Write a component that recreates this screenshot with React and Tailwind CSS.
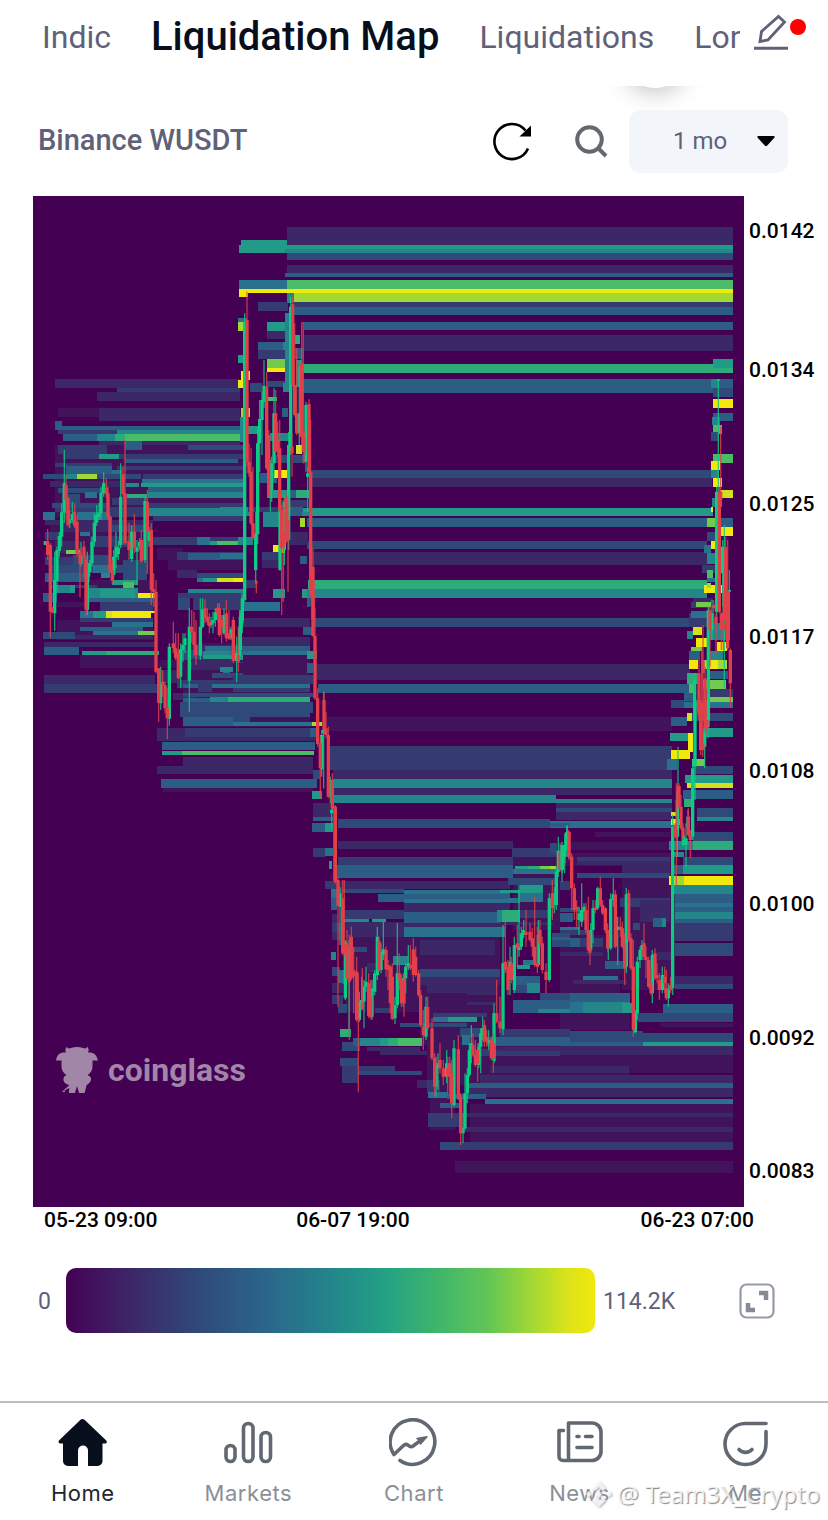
import React from "react";

const LEVELS = {
  a: "#41135a", b: "#3c2866", c: "#353a70", d: "#2f4a79", e: "#2b5d85", f: "#29718d",
  g: "#24858b", h: "#229a88", i: "#2dab79", j: "#4abb66", k: "#74ca4c", l: "#a2d834",
  m: "#d2e11b", y: "#f2e80c",
};

/* Heat bands: x1 y1 x2 y2 level */
const BANDS = `287 227 733 245 b;239 245 287 253 h;241 240 287 245 h;287 245 733 249 h;285 249 733 253 g;287 253 733 260 d;
287 265 733 273 b;285 273 733 277 e;239 280 287 289 f;287 280 733 289 j;287 293 294 303 g;294 293 733 302 l;
239 289 733 293 y;239 293 248 297 y;293 302 733 307 c;293 307 733 315 e;304 322 733 330 e;304 335 733 351 b;303 364 733 373 i;
303 379 733 393 e;311 470 712 478 d;311 478 712 487 b;303 508 713 516 h;307 518 713 527 e;307 541 707 549 d;312 552 707 565 b;
308 580 707 589 i;303 589 707 598 g;312 618 700 627 d;315 664 690 680 b;318 684 690 693 e;326 717 672 731 a;330 746 672 770 c;
333 770 672 779 b;333 779 672 788 g;333 788 672 795 b;334 795 556 803 g;556 799 672 803 g;556 803 672 808 b;556 808 672 812 d;
556 812 672 820 b;338 819 550 828 d;550 821 672 828 f;338 841 513 849 b;338 857 513 865 c;335 865 513 878 e;378 865 513 870 e;
335 881 510 889 b;335 889 404 893 d;404 890 510 894 f;378 894 510 902 e;404 899 510 903 f;404 903 510 912 b;404 912 505 923 e;
404 923 505 927 b;404 927 505 937 f;345 910 404 919 c;343 919 369 922 g;372 919 386 922 h;343 922 404 937 b;420 940 495 955 b;
420 969 500 975 d;420 975 500 985 b;470 1049 560 1056 c;490 1058 733 1066 a;490 1066 629 1073 b;560 1031 643 1042 d;
629 1033 733 1042 d;560 1042 643 1046 e;643 1042 733 1046 h;560 1046 733 1055 b;629 1055 733 1073 a;480 1075 733 1083 b;
468 1083 733 1088 e;468 1088 733 1097 b;485 1099 733 1104 f;460 1113 733 1117 b;460 1127 733 1132 b;460 1142 733 1150 c;455 1161 733 1173 a`;

/* Faint base layer behind the dense areas */
const BASE = `55 445 243 517 a;50 520 153 573 a;90 580 153 598 a;57 620 153 640 a;183 643 310 727 a;
345 937 500 1012 a;420 1012 500 1045 a;427 1045 630 1085 a;470 1104 733 1142 a;430 1085 455 1130 a;
513 850 560 930 a;560 853 672 866 a;622 866 672 990 a;560 935 620 993 a;560 1014 630 1030 a`;

/* Denser areas, drawn at three units per chart unit from their own origin */
const FIELDS = [
  [30, 360, `75 57 630 84 b;260 84 630 97 c;200 97 630 123 b;83 145 630 170 a;208 145 630 183 b;75 183 95 210 e;95 197 630 210 e;
83 210 260 222 c;260 210 640 223 g;100 223 200 243 e;200 223 255 243 g;255 223 285 243 i;285 223 640 243 j;208 243 630 256 b;285 243 335 270 e;
345 256 475 270 a;475 256 640 270 d;83 256 230 283 c;100 283 640 297 c;208 283 267 297 h;285 297 625 310 e;75 310 245 320 c;
108 317 245 343 e;260 317 640 330 c;245 330 275 343 f;38 343 333 357 d;340 343 640 357 c;108 343 140 356 g;140 343 200 356 l;
335 356 640 370 f;288 370 327 382 g;333 370 640 382 h;60 363 280 380 b;355 382 640 397 e;83 383 220 400 d;355 397 640 414 g;
290 403 350 428 i;165 397 200 415 f;95 403 150 430 d;65 430 240 445 d;245 415 355 435 c;355 428 640 443 c;75 443 240 457 c;
38 457 75 480 f;140 457 245 480 f;355 443 640 468 g;240 440 355 470 c;45 480 370 495 b;370 468 640 482 c;90 495 370 515 b;
150 515 180 528 f;45 515 90 540 c;240 495 350 515 d;370 530 640 555 c;500 530 540 555 f;540 543 560 555 h;560 543 625 555 j;
625 530 640 555 f;75 543 150 580 b;108 570 150 582 k;180 528 300 560 c;380 563 460 600 a;440 575 640 600 c;475 580 570 600 e;
570 580 640 598 f;45 590 150 615 c;130 585 240 615 d;60 615 350 640 d;190 615 245 640 f;213 640 240 655 g;45 640 180 665 e;
280 600 350 660 d;415 600 640 630 a;440 630 500 655 b;500 640 640 655 d;500 655 520 667 f;520 655 560 667 h;560 655 610 667 m;
610 655 640 667 y;60 675 200 685 c;75 675 135 700 g;120 675 135 700 h;245 660 325 675 h;175 685 325 713 g;210 687 315 713 h;
280 667 312 685 j;38 700 80 725 e;325 700 375 713 y;475 687 640 700 g;445 700 640 715 c;80 725 180 740 a;175 713 370 725 e;
210 725 370 753 c;150 753 190 773 f;190 753 228 773 h;228 753 247 773 m;247 753 362 773 y;362 753 375 760 y;150 773 370 785 c;
245 785 370 800 f;150 800 340 812 e;190 812 370 825 f;325 812 375 825 k;40 815 135 838 d;135 825 370 838 b;445 715 480 750 d;
42 847 375 860 b;42 860 147 886 e;155 873 228 886 h;228 873 387 886 i;150 886 375 925 a;387 900 640 925 a;42 945 375 972 b;
42 972 385 998 c;450 855 640 870 b;440 870 520 900 d;520 873 640 885 g;550 885 640 900 h;480 905 640 925 c;580 925 600 938 f;
545 938 640 955 d;385 930 450 970 b;440 960 640 985 c;460 973 640 985 e;430 998 500 1020 b;460 1013 600 1025 e;600 1013 660 1025 h;
450 1025 660 1072 d;475 1072 610 1097 e;610 1072 660 1095 d;380 1105 415 1144 c;460 1105 660 1144 b`],
  [150, 560, `270 173 480 200 b;270 232 480 258 b;270 127 390 152 f;115 87 280 100 g;130 113 280 150 c;165 258 240 272 f;240 258 480 273 e;
240 273 480 285 f;160 285 250 298 h;125 298 250 330 b;210 320 250 335 g;250 310 480 330 a;250 346 490 372 c;145 372 185 397 c;
185 372 480 385 f;250 385 480 397 c;100 400 490 412 d;180 412 235 425 g;235 412 480 425 i;125 425 490 460 d;253 458 480 470 d;
100 472 250 497 e;250 485 490 497 f;20 505 500 543 b;105 505 490 530 c;35 545 495 570 e;35 572 95 584 h;95 572 492 584 j;
100 590 490 617 b;20 617 490 643 b;33 657 500 683 e;40 683 490 695 a;373 87 400 112 i;470 113 490 138 d;460 200 490 225 e;
470 272 500 298 h;470 310 490 338 e;485 485 515 497 l;480 505 500 530 e;490 630 510 656 d;485 692 515 716 h;490 730 540 768 b;
490 768 545 782 e;485 792 525 815 e;525 792 548 815 h;490 865 525 890 c;525 865 550 888 f;537 903 547 928 h;525 963 560 987 d;
545 987 565 1015 g`],
  [220, 200, `55 353 80 366 f;55 366 70 392 l;55 465 70 490 h;62 512 90 540 y;55 540 70 563 y;62 625 90 650 l;115 307 205 332 c;
140 366 205 392 h;140 392 205 418 b;115 425 190 450 e;188 425 205 450 g;115 450 205 478 c;140 478 205 505 k;140 505 207 517 y;
90 550 125 577 d;140 543 205 560 d;190 550 215 577 g;140 590 170 603 j;185 625 205 650 e;85 677 120 703 h;60 650 80 725 g;
150 698 210 723 g;195 340 210 565 g;225 405 240 432 i;225 445 250 478 e;228 480 245 560 h;228 735 247 763 m;220 765 255 790 d;
165 765 205 790 d;120 820 170 848 e;162 810 200 835 y;140 870 200 895 h;200 870 227 895 e;227 870 268 895 i;0 922 90 948 g;
85 922 180 935 c;130 935 180 980 g;180 900 260 922 c;210 922 250 948 e;247 935 270 948 g;240 955 255 982 l;55 1010 100 1035 g;
160 1035 195 1060 y;210 995 265 1035 b;127 1055 180 1080 c;127 1080 180 1105 b;240 1068 260 1093 e;70 1140 110 1165 c;
160 1167 195 1193 h;247 1167 262 1193 h;260 1193 270 1220 e;70 1207 180 1232 f`],
  [560, 340, `460 57 519 84 h;453 118 478 143 g;460 143 519 170 d;460 177 519 204 y;460 218 519 243 e;455 232 480 256 g;458 256 485 283 j;
453 277 478 302 d;460 343 519 370 j;453 364 480 390 y;453 390 478 415 g;460 415 485 441 y;480 450 519 475 m;455 475 485 500 g;
453 500 460 515 y;440 535 465 562 k;478 535 519 560 e;483 562 519 588 y;440 575 465 602 d;453 602 465 628 y;433 615 453 640 f;
440 640 465 673 g;427 675 465 700 c;440 690 460 714 j;440 714 465 725 f;433 735 485 760 y;440 730 453 745 l;400 773 460 788 b;
393 787 453 805 c;407 787 453 801 k;387 820 440 860 c;393 813 440 835 f;380 872 400 898 g;400 860 427 886 m;407 893 440 920 y;
393 920 425 933 k;450 850 500 900 g;470 907 500 932 y;387 932 420 960 e;450 932 490 960 g;387 960 415 986 y;433 960 500 986 l;
450 960 473 986 y;450 993 505 1018 e;380 1000 413 1033 i;430 1020 497 1046 k;387 1033 400 1060 j;450 1046 519 1072 c;
450 1072 519 1086 k;450 1086 519 1104 f;333 1080 400 1105 c;373 1060 400 1083 e`],
  [560, 700, `0 425 330 450 a;105 397 330 410 a;50 470 330 482 c;50 482 187 495 b;187 482 330 520 b;50 520 330 535 d;0 543 30 570 c;230 555 330 580 a;
180 595 330 620 c;0 625 60 635 d;0 640 40 665 e;240 600 330 665 b;280 655 305 680 e;305 655 318 680 g;220 668 240 690 d;
0 680 60 690 f;0 690 90 705 c;0 715 60 740 e;60 715 130 740 c;0 755 130 768 b;135 783 200 807 e;0 795 135 807 a;70 828 173 840 f;
0 810 210 825 a;40 840 200 853 b;0 880 210 905 e;0 905 70 940 f;70 905 210 938 g;185 910 215 938 h;0 940 210 970 a;290 755 335 780 b;
333 0 372 25 d;372 5 519 25 f;392 40 519 64 d;333 52 380 78 e;330 98 385 124 h;430 85 519 110 h;333 150 390 176 y;383 98 400 155 y;
380 38 395 64 m;322 177 350 210 f;397 177 435 197 k;395 197 519 222 d;375 225 519 250 h;380 250 519 264 m;370 270 519 297 e;
372 297 400 322 i;410 323 519 350 d;410 350 519 362 g;333 335 357 349 m;333 357 365 375 y;400 397 519 423 d;327 423 400 450 g;
400 423 519 450 i;370 470 519 495 d;333 457 372 470 g;340 495 370 522 e;370 495 519 522 h;327 529 345 556 y;345 529 372 556 l;
372 529 519 556 y;335 556 519 582 g;345 582 519 610 e;345 610 519 622 f;345 622 519 635 e;345 635 519 657 g;345 657 519 668 e;
345 668 519 722 c;345 729 519 768 d;345 828 519 853 b;345 853 519 866 d;308 912 519 940 e;235 940 519 965 d;300 968 519 980 a`],
  [300, 680, `40 372 95 410 b;40 410 98 423 e;35 430 75 455 e;75 430 98 455 h;40 505 75 528 c;75 505 98 528 f;88 543 95 568 h;75 603 110 628 c;
92 628 115 653 f;92 653 110 690 e;95 703 115 730 b;95 730 130 755 c;95 755 130 780 b;92 815 107 840 g;95 860 120 887 d;115 870 135 912 f;
95 910 130 940 b;95 945 130 972 c;115 973 140 1000 d;120 1047 152 1070 i;127 1087 180 1112 d;120 1134 175 1158 d;127 1158 285 1185 c;
127 1185 175 1210 c;175 1172 365 1185 d;200 1100 360 1112 b;240 1112 380 1125 b;160 1075 180 1098 e;180 1075 240 1098 g;
240 1075 265 1098 h;265 1075 295 1098 i;295 1075 365 1098 j;635 505 770 530 c;750 430 810 440 e;750 490 770 520 d;645 557 685 568 h;
685 557 720 568 i;720 557 750 568 k;750 557 768 568 l;640 568 770 582 f;625 595 770 615 d;655 640 730 665 f;660 615 730 640 h;
600 630 660 640 h;625 655 660 670 f;590 690 605 725 g;605 690 660 725 i;660 690 760 715 c;600 725 760 735 b;755 760 810 800 d;
755 770 810 780 e;670 840 700 855 f;650 855 690 866 h;640 888 720 940 d;645 888 720 915 e;680 910 720 938 g;720 940 810 975 d;
640 960 810 998 e;715 987 810 998 g;500 940 590 975 b;400 1000 560 1012 c;400 1012 445 1025 f;445 1012 530 1025 h;300 1028 500 1040 d;
480 1045 560 1070 d;485 1065 510 1095 f;600 1047 810 1072 c;560 1072 810 1098 e;590 1100 810 1112 b;160 800 200 815 d;
280 828 325 855 g;200 850 240 875 b;225 985 270 1000 c;360 868 600 890 d;360 890 600 905 b;380 915 590 940 b;390 945 600 965 a;380 1200 420 1240 c;
385 1235 440 1255 f;440 1243 558 1258 e;420 1270 480 1285 e;385 1300 480 1340 c;420 1385 480 1410 d;350 1200 380 1225 b;540 1190 810 1200 b`],
];

/* Candles: centre, body top, body bottom, wick top, wick bottom */
const CANDLES = [
  [30, 360,
    `46 543 555 543 555;74 660 760 575 812;81 570 662 560 700;88 528 572 515 590;95 457 530 430 560;103 370 458 270 488;119 478 490 450 505;
127 462 480 425 490;153 590 612 545 620;172 636 750 575 765;179 610 636 600 650;186 545 610 530 620;193 488 545 460 560;200 465 488 435 498;
207 458 470 430 480;213 398 458 380 480;221 370 400 337 410;251 590 645 570 655;258 560 592 515 625;265 563 582 543 600;272 410 555 310 565;
305 515 597 495 605;321 562 575 540 675;329 545 560 535 570;345 423 600 410 608;357 515 543 500 560;392 970 1030 920 1050;418 860 1076 850 1097;
452 868 950 850 985;459 855 870 820 905;465 835 855 820 880;478 800 962 745 1057;511 800 887 715 900;518 748 800 715 805;543 788 795 770 803;
549 780 790 755 820;556 757 780 745 800;582 765 820 745 825;603 808 835 800 840;620 880 903 830 967;629 800 885 750 890;636 750 790 700 800`,
    `53 543 585 507 600;61 555 755 550 833;67 745 757 740 760;108 375 420 345 480;114 415 495 410 500;134 455 497 430 505;141 485 580 465 590;
150 577 612 565 712;162 560 595 543 655;168 597 750 590 768;229 383 403 355 415;234 400 470 380 480;240 470 635 465 640;247 630 662 600 672;
279 342 402 320 410;285 400 550 240 555;297 543 570 488 600;313 515 563 462 580;334 540 603 510 608;352 425 515 390 642;364 510 690 490 735;
371 688 695 640 740;378 695 935 660 940;386 925 1028 925 1085;398 965 975 930 1010;405 975 1045 965 1060;412 1045 1075 985 1138;
430 850 865 785 880;437 865 895 820 900;445 880 955 820 958;485 800 815 750 850;492 815 855 755 890;498 855 885 780 915;525 745 775 718 790;
532 770 785 745 795;538 785 798 760 820;563 743 760 730 785;568 745 825 730 830;575 780 800 765 850;589 760 835 720 845;597 820 837 750 840;610 780 903 770 908;
625 885 905 800 935`],
  [220, 200,
    `74 366 1200 340 1205;67 1195 1260 1190 1300;61 1250 1350 1240 1370;107 1000 1110 935 1150;113 730 1003 680 1033;119 657 730 600 815;126 600 660 575 765;
132 557 605 480 625;162 640 790 565 830;155 790 870 770 905;151 870 885 780 935;180 930 1110 905 1112;193 905 1050 885 1095;206 735 1020 695 1050;
212 320 750 290 765;258 615 785 605 815;263 820 830 800 935;238 640 700 500 735`,
    `81 360 785 275 800;87 785 820 730 830;93 815 970 745 975;99 970 1015 800 1020;109 1145 1150 1140 1180;140 560 805 515 810;146 705 885 690 890;
167 640 755 570 760;173 720 755 665 770;179 745 930 660 935;185 930 1045 915 1245;190 1000 1040 920 1205;198 890 1025 880 1030;204 960 1020 900 1175;
216 740 760 700 830;218 313 555 290 560;224 555 645 370 650;230 640 700 445 705;245 490 712 366 735;252 712 755 690 790;250 700 755 366 790;267 612 815 598 820;
272 815 1185 660 1190;279 1100 1260 1045 1265`],
  [150, 560,
    `515 525 628 510 650;521 510 520 395 685;541 660 710 650 730;545 750 760 740 800`,
    `489 105 228 105 230;495 228 415 145 420;503 415 552 385 560;511 550 625 530 715;522 420 510 395 520;528 505 525 455 535;535 525 710 500 715;
547 660 745 640 750;556 740 965 735 970`],
  [300, 680,
    `120 640 680 620 795;136 785 955 780 960;147 800 895 780 1060;178 965 1020 935 1025;185 960 975 890 990;192 920 965 900 1045;198 905 920 860 935;
216 925 1010 900 1020;224 880 935 870 945;232 770 885 740 900;243 815 870 790 880;250 808 825 725 840;285 975 1015 950 1032;292 880 975 730 985;
310 895 970 880 980;317 860 895 850 940;325 850 860 795 870;378 980 1070 950 1080;408 1160 1220 1130 1250;414 1150 1165 1120 1230;440 1150 1190 1110 1210;
462 1105 1275 1080 1280;489 1345 1360 1300 1390;495 1240 1345 1180 1350;502 1185 1240 1165 1270;508 1110 1185 1090 1190;514 1090 1110 1035 1150;
536 1100 1155 1090 1165;542 1060 1100 1045 1180;548 1045 1065 1010 1080;566 1080 1088 1050 1110;582 1000 1143 970 1150;609 850 1048 735 1065;
630 845 900 800 945;643 795 930 770 940;657 800 810 615 830;664 760 800 740 810;671 750 765 720 775;715 765 855 720 860;748 655 900 640 905;
763 640 675 620 700;769 575 675 560 690;775 512 575 470 590;787 525 570 495 580;795 495 530 480 550;802 455 495 435 510`,
    `105 380 603 378 610;114 600 678 590 980;128 655 820 600 825;133 790 820 600 830;141 790 895 750 900;148 895 905 765 1080;154 770 895 740 900;
161 870 890 800 1000;170 875 1020 830 1025;175 1015 1020 880 1237;187 970 985 865 990;206 908 1008 880 1015;212 950 1010 900 1018;237 783 870 770 875;
258 810 868 800 890;264 855 870 840 930;271 860 970 855 1000;277 890 1017 850 1020;298 880 900 820 930;304 900 970 885 980;312 900 970 880 1010;
331 855 865 795 870;340 808 885 775 905;347 830 885 800 890;356 880 945 870 950;362 945 1035 930 1040;370 1040 1065 990 1110;383 980 1045 950 1050;
396 1045 1135 1015 1140;404 1135 1220 1120 1245;420 1140 1165 1090 1180;430 1165 1190 1140 1215;443 1165 1190 1130 1245;449 1150 1190 1130 1250;
455 1180 1270 1140 1315;475 1108 1255 1065 1260;482 1250 1360 1240 1395;519 1095 1125 1060 1130;526 1125 1155 1080 1160;533 1110 1150 1090 1205;
553 1035 1085 1020 1100;560 1070 1085 1050 1100;574 1080 1135 1070 1140;580 1090 1135 1060 1178;590 1000 1025 900 1030;600 1025 1045 950 1060;
616 845 870 725 880;624 860 930 840 945;634 850 900 830 910;652 790 805 735 860;678 755 765 690 800;690 755 780 730 785;697 775 800 745 830;
704 800 855 650 860;712 850 860 740 880;720 750 790 720 800;727 790 870 770 880;738 875 900 850 940;757 640 685 600 720;780 515 570 490 575;806 455 530 450 535`],
  [560, 700,
    `6 435 510 425 545;14 435 470 400 520;20 397 435 378 450;57 640 660 620 705;65 630 665 550 680;72 620 635 610 660;92 690 750 670 760;99 625 690 600 730;
113 565 625 560 630;145 720 745 690 780;152 597 745 580 750;160 583 600 535 620;173 680 690 650 795;199 583 800 563 820;226 940 997 930 1000;
232 785 940 770 960;240 750 780 740 805;246 735 750 720 780;277 765 880 750 910;307 825 870 800 880;325 870 895 850 920;338 380 865 345 885;
354 280 300 140 350;352 300 410 260 470;370 405 435 380 440;378 415 435 370 500;384 350 380 330 400;398 205 410 180 420;405 0 200 0 300;
434 100 140 80 205;444 0 80 0 115`,
    `27 397 470 395 480;35 470 565 460 630;43 565 630 550 660;50 620 630 600 680;78 630 690 610 700;85 690 750 590 760;90 745 755 700 795;106 622 630 600 640;
121 565 615 530 620;128 615 640 600 645;136 625 690 620 700;143 690 745 670 755;166 583 740 570 745;181 680 690 650 710;187 685 740 665 745;
194 735 805 700 855;206 580 720 570 725;213 715 805 700 810;220 800 990 720 1010;252 730 770 670 780;258 770 780 740 835;266 780 860 770 865;
273 850 880 800 885;285 760 835 745 840;291 825 835 790 850;298 840 870 820 900;314 830 850 800 880;319 865 895 810 900;332 855 870 830 880;
345 375 410 370 415;349 390 410 250 555;357 258 320 250 325;363 320 385 285 390;369 385 410 370 420;385 350 405 325 410;391 405 420 390 475;
416 0 40 0 50;422 30 150 0 165;428 130 150 50 170;435 0 85 0 90;441 60 85 0 105`],
  [560, 340,
    `404 1020 1140 1000 1140;445 810 1140 800 1140;470 455 815 440 830;475 118 123 118 455;456 820 870 780 900;488 620 700 600 800;493 625 845 555 1045;508 750 755 690 900`,
    `417 1000 1120 960 1140;425 1090 1120 930 1140;429 960 1000 855 1140;435 1015 1140 980 1140;450 810 870 800 980;461 795 805 780 870;468 830 850 820 945;
478 455 815 440 820;482 455 480 260 500;484 820 870 815 930;490 850 870 760 930;497 622 845 590 850;503 755 925 600 930;511 930 1030 925 1100`],
];

const parse = (text) => text.split(";").map((row) => row.trim().split(/\s+/));

function Bands({ data }) {
  return parse(data).map(([x1, y1, x2, y2, level], i) => (
    <rect key={i} x={x1} y={y1} width={x2 - x1} height={y2 - y1} fill={LEVELS[level]} />
  ));
}

function candlePaths(data) {
  let body = "";
  let wick = "";
  parse(data).forEach(([cx, top, bottom, high, low]) => {
    body += `M${cx - 5} ${top}h10V${bottom}h-10z`;
    wick += `M${cx - 2} ${high}h4V${low}h-4z`;
  });
  return [body, wick];
}

function Candles({ data, color }) {
  const [body, wick] = candlePaths(data);
  return (
    <g fill={color}>
      <path d={wick} opacity="0.8" />
      <path d={body} />
    </g>
  );
}

function Heatmap() {
  return (
    <svg viewBox="33 196 711 1011" preserveAspectRatio="none" shapeRendering="crispEdges" className="block h-full w-full" role="img" aria-label="Liquidation heat map">
      <rect x="33" y="196" width="711" height="1011" fill="#440053" />
      <Bands data={BASE} />
      <Bands data={BANDS} />
      {FIELDS.map(([x, y, data], i) => (
        <g key={i} transform={`translate(${x} ${y}) scale(0.33333)`}><Bands data={data} /></g>
      ))}
      <g shapeRendering="auto">
        {CANDLES.map(([x, y, up, down], i) => (
          <g key={i} transform={`translate(${x} ${y}) scale(0.33333)`}>
            <Candles data={up} color="#0ccb83" />
            <Candles data={down} color="#e33f4b" />
          </g>
        ))}
      </g>
    </svg>
  );
}

function BrandMark() {
  return (
    <svg viewBox="0 0 42 47" className="h-[47px] w-[42px]" fill="currentColor" aria-hidden="true">
      <path d="M11 .5c0 2 2 2.500 4 1.500 4-1.500 8-1.500 12 0 2 1 4 .5 4-1.500 2 2 2 4 1 6 5-.5 8.500 1.500 10 8h-5.500v6c0 4-2 6.500-5 8.500 3 1 4 3 3.500 5-.8 2.500-2.500 4-4.500 5-.5 3-1 5-2 8h-5.500L21 40l-2 7h-6l.2-5-4.700 2.500L9 46H6l3.500-3.500 3.500-3V39c-3-.8-5-2.500-5.500-4.500-.5-3 1-4.500 3-5.500-3-2-5-4.500-5-8.500v-6H0C1 8 4.500 6 10 6.500c-1-2-.8-4 1-6z" />
    </svg>
  );
}

const TOP_TABS = ["Indic", "Liquidation Map", "Liquidations", "Lon"];
const PRICES = ["0.0134", "0.0125", "0.0117", "0.0108", "0.0100", "0.0092", "0.0083"];

function Header() {
  return (
    <header className="flex h-[86px] items-start bg-white">
      <nav className="flex h-[74px] min-w-0 flex-1 items-center gap-10 overflow-hidden pl-[42px] text-[32px] whitespace-nowrap text-[#5f6179]">
        {TOP_TABS.map((t) => (
          <a key={t} href="#" className={t === "Liquidation Map" ? "text-[40px] font-medium text-[#070e1c]" : ""}>{t}</a>
        ))}
      </nav>
      <button type="button" aria-label="Edit tabs" className="mt-3 flex w-[88px] items-start gap-px pl-[13px]">
        <svg viewBox="0 0 36 40" className="h-10 w-9" fill="none" stroke="#5f6179" strokeWidth="2.800">
          <path d="M7 29.500l1.500-10L25.500 4.500l6 5.500L15 28z" strokeLinejoin="miter" />
          <path d="M1 36.200h34" strokeWidth="3" />
        </svg>
        <span className="mt-[7px] size-4 rounded-full bg-[#fe0000]" />
      </button>
    </header>
  );
}

function Toolbar() {
  return (
    <div className="relative flex h-[110px] items-center overflow-hidden pr-10 pl-[38px]">
      <div className="absolute -top-[62px] right-[141px] size-16 rounded-full bg-white shadow-[0_4px_24px_rgba(0,0,0,0.25)]" />
      <h1 className="min-w-0 flex-1 truncate text-[29px] font-medium text-[#5f6179]">Binance WUSDT</h1>
      <button type="button" aria-label="Refresh" className="mr-[42px]">
        <svg viewBox="0 0 40 40" className="size-10" fill="none" stroke="#000" strokeWidth="2.600">
          <path d="M36 27.500A17.500 17.500 0 1 1 33.500 9.500" />
          <path d="M39 4.500V15.500H27.500z" fill="#000" stroke="none" />
        </svg>
      </button>
      <button type="button" aria-label="Search" className="mr-[21px]">
        <svg viewBox="0 0 34 34" className="size-[34px]" fill="none" stroke="#646970" strokeWidth="4">
          <circle cx="15.500" cy="15.500" r="12.300" />
          <path d="M24 24l8 8" />
        </svg>
      </button>
      <div className="relative">
        <select aria-label="Range" defaultValue="1 mo" className="h-[63px] w-[159px] appearance-none rounded-[12px] bg-[#f2f6fa] pl-[44px] text-[24px] text-[#5f6179]">
          <option>1 mo</option>
        </select>
        <svg viewBox="0 0 18 11" className="pointer-events-none absolute top-[26px] right-[13px] h-[11px] w-[18px]" aria-hidden="true">
          <path d="M1.500 0h15c1 0 1.500 1 .8 1.800L10 9.800c-.6.6-1.400.6-2 0L.7 1.800C0 1 .5 0 1.500 0z" fill="#000" />
        </svg>
      </div>
    </div>
  );
}

const NAV = [
  ["Home", (
    <g fill="#070e1c" stroke="none">
      <path d="M22.500 1.800a3 3 0 0 1 4 0L48 22.200c1.500 1.700.5 3.300-1 3.300h-2.500V43a5 5 0 0 1-5 5H30V32.500a5 5 0 0 0-10 0V48H10a5 5 0 0 1-5-5V25.500H2.500C.5 25.500 0 23.700 1.200 22.200z" />
    </g>
  )],
  ["Markets", (
    <g>
      <rect x="2" y="27.500" width="9" height="16" rx="4.500" />
      <rect x="19.500" y="5.500" width="9.500" height="38" rx="4.700" />
      <rect x="37" y="14.500" width="9.500" height="29" rx="4.700" />
    </g>
  )],
  ["Chart", (
    <g>
      <path d="M11 42.500A22.300 22.300 0 1 0 5 36.500L14.500 27.500c1.800-1.800 3.500-1.500 5 0 1.800 1.800 3.500 1.500 5.500-.2L33 21.500" />
      <path d="M28 20.500l10-1.700-6.500 7.200.2-3.500z" fill="#626871" strokeWidth="1.500" />
    </g>
  )],
  ["News", (
    <g>
      <path d="M13.500 5H37a9 9 0 0 1 9 9v19.500a9 9 0 0 1-9 9H8a4 4 0 0 1-4-4V12.500H8.500M13.500 5v37.500" />
      <path d="M22 18.500h2M30.500 18.500H37M22 29.500h15" />
    </g>
  )],
  ["Me", (
    <g>
      <path d="M45 5.500H24.500a20.500 20.500 0 1 0 20.500 20.500V13.500" />
      <path d="M18 31.500c3.500 3.800 9.500 3.800 13 0" />
    </g>
  )],
];

function BottomNav() {
  return (
    <nav className="relative grid h-[119px] grid-cols-5 border-t-2 border-[#b9bcc1] bg-white font-[Inter,sans-serif]">
      {NAV.map(([label, icon], i) => (
        <a key={label} href="#" className={`flex flex-col items-center gap-[10px] pt-[15px] text-[22px] tracking-wide ${i === 0 ? "text-[#22262d]" : "text-[#8b9098]"}`}>
          <svg viewBox="0 0 49 49" className="size-[49px] shrink-0" fill="none" stroke="#626871" strokeWidth="3.600" strokeLinecap="round" strokeLinejoin="round" aria-hidden="true">{icon}</svg>
          <span>{label}</span>
        </a>
      ))}
      <div className="pointer-events-none absolute right-2 bottom-2 flex items-center gap-1 font-['Noto_Sans',sans-serif] text-[24px] whitespace-nowrap text-white/80 [text-shadow:1px_1px_1px_#85878b]">
        <svg viewBox="0 0 28 28" className="size-7 drop-shadow-[1px_1px_1px_#999]" fill="currentColor" aria-hidden="true">
          <path d="M14 1l7 7-3 3-4-4-4 4-3-3zM4 11l3 3-3 3-3-3zM24 11l3 3-3 3-3-3zM14 11l3 3-3 3-3-3zM7 20l3-3 4 4 4-4 3 3-7 7z" />
        </svg>
        <span>@ Team3X_Crypto</span>
      </div>
    </nav>
  );
}

export default function App() {
  return (
    <div className="flex min-h-screen flex-col bg-white font-[Roboto,'Liberation_Sans',sans-serif]">
      <Header />
      <Toolbar />
      <main className="flex-1">
        <div className="flex pl-[33px]">
          <div className="relative aspect-[711/1011] min-w-0 flex-1">
            <Heatmap />
            <div className="absolute bottom-[114px] left-[23px] flex items-center gap-[10px] text-[32px] leading-none font-bold text-[#a186a8]">
              <BrandMark />
              <span>coinglass</span>
            </div>
          </div>
          <div className="flex w-[84px] flex-col pt-[23px] pb-6 pl-[5px] text-[21px] leading-6 font-medium text-black">
            <span className="h-[139px]">0.0142</span>
            <div className="flex flex-1 flex-col justify-between">
              {PRICES.map((p) => <span key={p}>{p}</span>)}
            </div>
          </div>
        </div>
        <div className="flex pt-px pr-[74px] pl-[44px] text-[21px] leading-6 font-medium whitespace-nowrap text-black">
          <span>05-23 09:00</span>
          <span className="flex-[137]" />
          <span>06-07 19:00</span>
          <span className="flex-[228]" />
          <span>06-23 07:00</span>
        </div>
        <div className="mt-9 flex items-center pr-[53px] pl-[38px] text-[23px] text-[#5f6179]">
          <span className="w-7 pt-1">0</span>
          <div className="h-[65px] flex-1 rounded-[10px] bg-[linear-gradient(90deg,#440154_0%,#3d2668_12%,#2f497a_25%,#2a6b8c_40%,#23858b_50%,#22a085_60%,#3eb56c_70%,#62c655_80%,#a2d834_88%,#dce319_95%,#f2e80c_100%)]" />
          <span className="w-36 pt-1 pl-2">114.2K</span>
          <button type="button" aria-label="Full screen">
            <svg viewBox="0 0 36 36" className="size-9" fill="none" stroke="#959ba4" strokeWidth="2.200">
              <rect x="1.500" y="1.500" width="33" height="33" rx="6" />
              <path d="M20 10h7v7M9 20v7h7" stroke="#858b95" strokeWidth="4.500" />
            </svg>
          </button>
        </div>
      </main>
      <BottomNav />
    </div>
  );
}
